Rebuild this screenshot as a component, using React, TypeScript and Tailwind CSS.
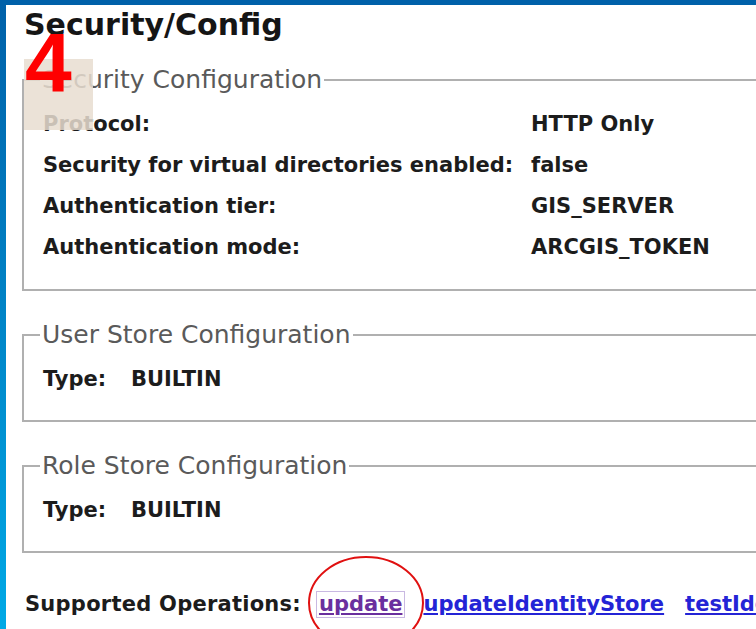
import React from "react";

type Row = { label: string; value: string };

const securityRows: Row[] = [
  { label: "Protocol:", value: "HTTP Only" },
  { label: "Security for virtual directories enabled:", value: "false" },
  { label: "Authentication tier:", value: "GIS_SERVER" },
  { label: "Authentication mode:", value: "ARCGIS_TOKEN" },
];

// Grey box with a caption sitting on its top edge
function Group({ title, children, className = "" }: { title: string; children: React.ReactNode; className?: string }) {
  return (
    <fieldset className={`w-[800px] border-2 border-[#b0b0b0] ${className}`}>
      <legend className="ml-[16px] px-[2px] text-[25px] leading-[28px] text-[#5a5a5a] font-normal">{title}</legend>
      {children}
    </fieldset>
  );
}

export default function App() {
  return (
    <div
      className="relative h-[629px] w-[756px] overflow-hidden bg-white border-t-[5px] border-[#0061a9] text-[#1c1c1c]"
      style={{ fontFamily: '"DejaVu Sans", Verdana, sans-serif' }}
    >
      <div className="flex h-full">
        {/* left frame strip */}
        <div className="w-[6px] shrink-0 bg-gradient-to-b from-[#0061a9] to-[#00a9e6]" />

        <div className="flex-1 min-w-0">
          <h1 className="pt-[2px] pl-[18px] text-[30px] leading-[35px] font-bold text-[#151515]">Security/Config</h1>

          <div className="pl-[16px]">
            <Group title="Security Configuration" className="mt-[24px] pt-[10px] pb-[21px]">
              {securityRows.map((r) => (
                <div key={r.label} className="flex h-[41px] items-center pl-[19px] text-[21px] font-bold">
                  <span className="w-[488px] shrink-0">{r.label}</span>
                  <span>{r.value}</span>
                </div>
              ))}
            </Group>

            <Group title="User Store Configuration" className="mt-[30px] pt-[10px] pb-[20px]">
              <div className="flex h-[41px] items-center pl-[19px] text-[21px] font-bold">
                <span className="w-[88px] shrink-0">Type:</span>
                <span>BUILTIN</span>
              </div>
            </Group>

            <Group title="Role Store Configuration" className="mt-[30px] pt-[10px] pb-[20px]">
              <div className="flex h-[41px] items-center pl-[19px] text-[21px] font-bold">
                <span className="w-[88px] shrink-0">Type:</span>
                <span>BUILTIN</span>
              </div>
            </Group>
          </div>

          <div className="mt-[31px] flex h-[41px] items-center pl-[19px] text-[21px] font-bold whitespace-nowrap">
            <span className="tracking-[0.25px]">Supported Operations:</span>
            <a href="#" className="ml-[15px] border border-[#c9b9e2] px-[2px] leading-[25px] text-[#6a2f9e] underline">
              update
            </a>
            <a href="#" className="ml-[18px] text-[#2424d6] underline">updateIdentityStore</a>
            <a href="#" className="ml-[21px] text-[#2424d6] underline">testIdentityStore</a>
          </div>
        </div>
      </div>

      {/* step marker */}
      <div className="absolute left-[24px] top-[54px] h-[71px] w-[69px] bg-[#e8ddd0]/85" />
      <span
        className="absolute left-[25px] top-[16px] text-[84px] leading-[84px] font-bold text-[#ff0000]"
        style={{ fontFamily: '"Liberation Sans", Arial, sans-serif' }}
      >
        4
      </span>

      {/* highlight ring around the update link */}
      <svg className="absolute left-[300px] top-[543px]" width="140" height="110" viewBox="0 0 140 110">
        <ellipse cx="66" cy="55" rx="57" ry="46" fill="none" stroke="#e01010" strokeWidth="2" />
      </svg>
    </div>
  );
}
